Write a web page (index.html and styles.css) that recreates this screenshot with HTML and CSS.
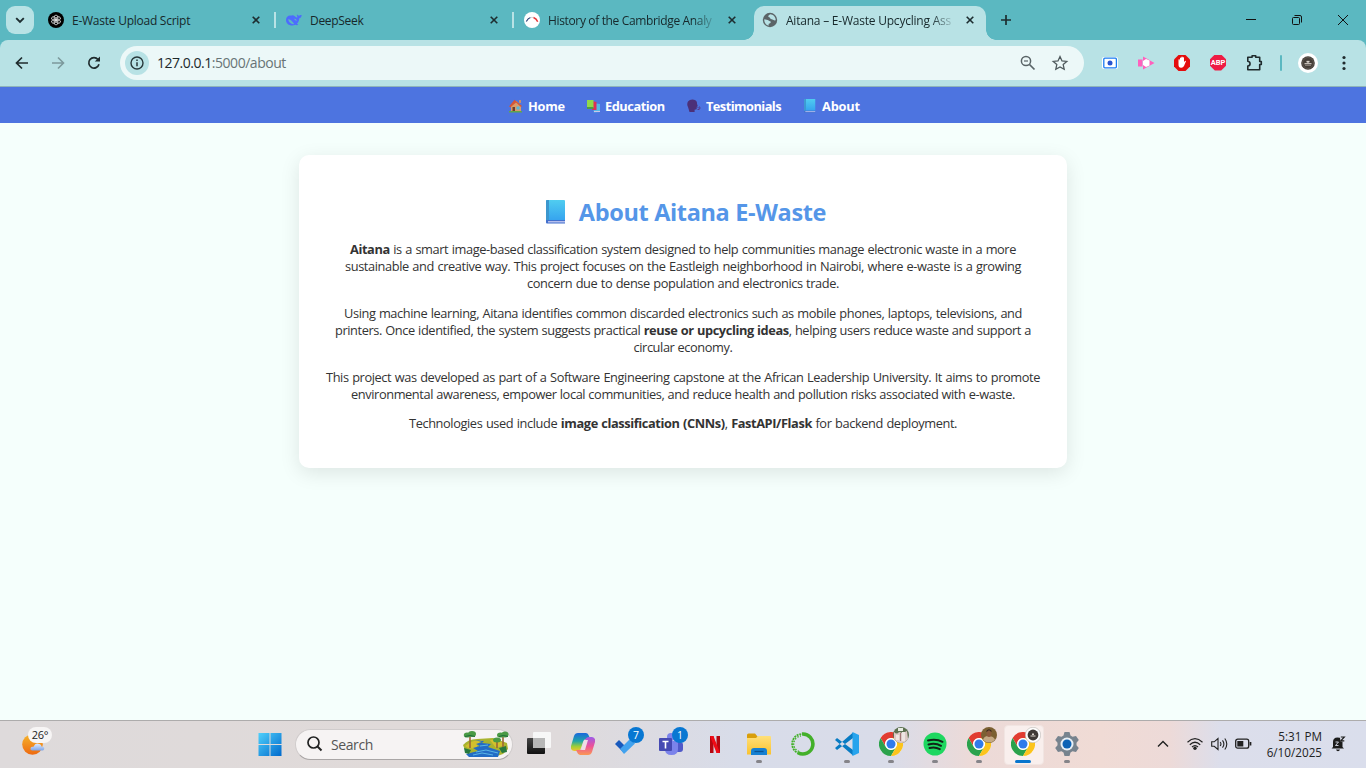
FILE: index.html
```html
<!DOCTYPE html>
<html lang="en">
<head>
<meta charset="utf-8">
<title>Aitana – E-Waste Upcycling Assistant</title>
<link rel="stylesheet" href="styles.css">
</head>
<body>
<svg class="defs" width="0" height="0">
  <defs>
    <linearGradient id="book" x1="0" y1="0" x2="0" y2="1"><stop offset="0" stop-color="#50cdf0"/><stop offset="1" stop-color="#36a4ef"/></linearGradient>
    <linearGradient id="win" x1="0" y1="0" x2="1" y2="1"><stop offset="0" stop-color="#4fd0fb"/><stop offset="1" stop-color="#0069cc"/></linearGradient>
    <linearGradient id="moon" x1="0" y1="0" x2="0" y2="1"><stop offset="0" stop-color="#f5b52c"/><stop offset="1" stop-color="#ee6910"/></linearGradient>
    <linearGradient id="cloud" x1="0" y1="0" x2="0" y2="1"><stop offset="0" stop-color="#e3efff"/><stop offset="1" stop-color="#7fa5e8"/></linearGradient>
    <linearGradient id="cop1" x1="0" y1="0" x2="0" y2="1"><stop offset="0" stop-color="#1a68dd"/><stop offset=".45" stop-color="#20a5a9"/><stop offset=".75" stop-color="#9fce37"/><stop offset="1" stop-color="#f2c32e"/></linearGradient>
    <linearGradient id="cop2" x1="0" y1="0" x2="0" y2="1"><stop offset="0" stop-color="#9c5be8"/><stop offset=".5" stop-color="#ec5199"/><stop offset="1" stop-color="#fb9854"/></linearGradient>
    <linearGradient id="fold" x1="0" y1="0" x2="0" y2="1"><stop offset="0" stop-color="#ffe07a"/><stop offset="1" stop-color="#fac22f"/></linearGradient>
    <linearGradient id="dark" x1="0" y1="0" x2="0" y2="1"><stop offset="0" stop-color="#454545"/><stop offset="1" stop-color="#111"/></linearGradient>
    <symbol id="x" viewBox="0 0 8 8"><path d="M.7.7l6.6 6.6M7.3.7L.7 7.3" stroke="#1d2d30" stroke-width="1.6"/></symbol>
    <symbol id="bluebook" viewBox="0 0 20 24"><path d="M1 0h17q1 0 1 1v19H0V1q0-1 1-1z" fill="url(#book)"/><path d="M0 1q0-1 1-1h2v20H0z" fill="#3c97ce"/><path d="M0 20h19v3.5H1q-1 0-1-1z" fill="#4370cd"/><path d="M2 21.2h17v1.2H2z" fill="#d4d3f4"/></symbol>
    <symbol id="chrome" viewBox="0 0 24 24"><circle cx="12" cy="12" r="12" fill="#fff"/><path d="M1.6 6A12 12 0 0 1 22.4 6H12a6 6 0 0 0-5.2 9z" fill="#e13c31"/><path d="M1.6 6A12 12 0 0 0 12 24l5.2-9a6 6 0 0 1-10.4 0z" fill="#2ba24c"/><path d="M22.4 6A12 12 0 0 1 12 24l5.2-9A6 6 0 0 0 12 6z" fill="#fcc41c"/><circle cx="12" cy="12" r="5.7" fill="#fff"/><circle cx="12" cy="12" r="4.5" fill="#2f7bea"/></symbol>
    <symbol id="seal" viewBox="0 0 20 20"><circle cx="10" cy="10" r="10" fill="#fff"/><circle cx="10" cy="10" r="6.8" fill="#453e38"/><circle cx="10" cy="10" r="5.5" fill="none" stroke="#6f675f" stroke-width=".6"/><path d="M6.5 10.2h7v1.1h-7zM8.3 9q1.7 1.4 3.4 0l-.7-1.6-1 1-1-1z" fill="#eee8e0"/><path d="M7 12.5h6" stroke="#9a9188" stroke-width=".7"/></symbol>
  </defs>
</svg>

<header class="tabstrip">
  <div class="tabsearch"><svg width="10" height="7" viewBox="0 0 10 7"><path d="M1.2 1.2L5 5l3.8-3.8" fill="none" stroke="#1d2d30" stroke-width="1.9"/></svg></div>
  <div class="tab">
    <svg class="fav" viewBox="0 0 16 16"><circle cx="8" cy="8" r="8" fill="#000"/><g fill="none" stroke="#ddd" stroke-width=".8"><ellipse cx="8" cy="5.7" rx="1.9" ry="2.6"/><ellipse cx="8" cy="5.7" rx="1.9" ry="2.6" transform="rotate(60 8 8)"/><ellipse cx="8" cy="5.7" rx="1.9" ry="2.6" transform="rotate(120 8 8)"/><ellipse cx="8" cy="5.7" rx="1.9" ry="2.6" transform="rotate(180 8 8)"/><ellipse cx="8" cy="5.7" rx="1.9" ry="2.6" transform="rotate(240 8 8)"/><ellipse cx="8" cy="5.7" rx="1.9" ry="2.6" transform="rotate(300 8 8)"/></g></svg>
    <span class="title t1">E-Waste Upload Script</span><svg class="close"><use href="#x"/></svg><i class="sep"></i>
  </div>
  <div class="tab">
    <svg class="fav" viewBox="0 0 16 16"><path d="M9.2 4.4C10 5.5 11 6 11.5 5c-.8-1-.8-2-.4-2.8.4 1 1.2 1.4 1.9 1.5.8-.6 1.7-.8 2.7-.6-.2 1.9-1 3-2.4 3.2-.2 2.5-1.1 4.2-2.3 5.4l1.3 1c-1 .7-2 .5-2.9 0C5 14.800 0 12.500 0 8 0 4.500 2.900 2.900 5.300 3.700 6.500 3 7.500 3.500 9.200 4.400z" fill="#4d6bfe"/><path d="M2.200 7.300c2-.5 4.200 1.900 6 4.800-2.800.4-5.600-1.500-6-4.800zM8 6.800c1.400-.3 2.500.7 2.700 2-.6-.1-1.500-.2-2.700-2z" fill="#5bb8c1"/></svg>
    <span class="title t2">DeepSeek</span><svg class="close"><use href="#x"/></svg><i class="sep"></i>
  </div>
  <div class="tab">
    <svg class="fav" viewBox="0 0 16 16"><circle cx="8" cy="8" r="8" fill="#fff"/><path d="M2.300 9.500Q4 6.200 6.500 5.500" fill="none" stroke="#2b3f77" stroke-width="1.200"/><path d="M6.500 5.500Q8 5 9.500 5.700" fill="none" stroke="#ccc" stroke-width=".8"/><path d="M9.500 5.500Q12.500 6.500 13.700 9.800" fill="none" stroke="#e5383b" stroke-width="1.500"/></svg>
    <span class="title t3 fade">History of the Cambridge Analy</span><svg class="close"><use href="#x"/></svg>
  </div>
  <div class="tab active">
    <svg class="fav" viewBox="0 0 16 16"><circle cx="8" cy="8" r="7.200" fill="#5b6467"/><path d="M8.300 2.300c-1.200.9-2 .9-2 2.100 0 1 1.600.6 1.800 1.500.3 1.200 1.300 1.100 2.300 1.500 1 .3 1.500 1.300 3.300.9C13.900 4.900 11 2.500 8.300 2.300zM2.300 7.300c1.500.4 3.300.3 4.300 1.200.9.800 2.300.6 2.200 1.700-.2 1.300-2.300 1-2.200 2.300v1.200C4.100 13.200 2 10.500 2.300 7.300z" fill="#b8e2e5"/></svg>
    <span class="title t4 fade">Aitana – E-Waste Upcycling Ass</span><svg class="close"><use href="#x"/></svg>
  </div>
  <div class="newtab"><svg width="10" height="10"><path d="M5 0v10M0 5h10" stroke="#1d2d30" stroke-width="1.700"/></svg></div>
  <div class="controls">
    <svg viewBox="0 0 46 40"><path d="M18 19.500h10" stroke="#111"/></svg>
    <svg viewBox="0 0 46 40"><rect x="18.500" y="17.500" width="7" height="7" rx="1" fill="none" stroke="#111"/><path d="M20.500 15.500h5.500q1.500 0 1.500 1.500v5.500" fill="none" stroke="#111"/></svg>
    <svg viewBox="0 0 46 40"><path d="M18 15l10 10M28 15l-10 10" stroke="#111"/></svg>
  </div>
</header>

<div class="toolwrap"><div class="toolbar">
  <svg class="cell" viewBox="0 0 36 36"><path d="M24 18H13M18 12.500L12.500 18l5.500 5.500" fill="none" stroke="#1f2b2d" stroke-width="1.700"/></svg>
  <svg class="cell" viewBox="0 0 36 36"><path d="M12 18h11M18 12.500l5.500 5.500-5.500 5.500" fill="none" stroke="#7c999c" stroke-width="1.600"/></svg>
  <svg class="cell" viewBox="0 0 36 36"><path d="M23 19.300A5.200 5.200 0 1 1 22 14.500" fill="none" stroke="#1f2b2d" stroke-width="1.700"/><path d="M24 11.500v5h-5.200z" fill="#1f2b2d"/></svg>
  <div class="omnibox">
    <div class="info"><svg width="14" height="14"><circle cx="7" cy="7" r="6" fill="none" stroke="#28383a" stroke-width="1.400"/><path d="M7 6.200v4M7 3.500v1.500" stroke="#28383a" stroke-width="1.500"/></svg></div>
    <span class="url">127.0.0.1<em>:5000/about</em></span>
    <svg class="oi" viewBox="0 0 32 32"><circle cx="14" cy="14" r="4.600" fill="none" stroke="#596467" stroke-width="1.500"/><path d="M17.500 17.500l5 5" stroke="#596467" stroke-width="1.700"/><path d="M12 14h4" stroke="#596467" stroke-width="1.200"/></svg>
    <svg class="oi" viewBox="0 0 32 32"><path d="M16 9.500l2 4.400 4.800.5-3.600 3.200 1 4.700-4.200-2.400-4.200 2.400 1-4.700-3.600-3.200 4.800-.5z" fill="none" stroke="#4f5a5d" stroke-width="1.300"/></svg>
  </div>
  <svg class="cell" viewBox="0 0 36 36"><rect x="10" y="12" width="16" height="12" rx="2" fill="#fff"/><rect x="11.800" y="13.200" width="12.600" height="9.600" rx="1" fill="#fff" stroke="#197bf2" stroke-width="1.300"/><circle cx="18" cy="18" r="2.500" fill="#2854cf"/></svg>
  <svg class="cell" viewBox="0 0 36 36"><path d="M15 11.500L26.500 18 15 24.500z" fill="#ff60bd"/><path d="M10 14.500h4.500v7H10z" fill="#ff60bd"/><path d="M15 16l3-2 3.500 1.500v5L18 22l-3-2z" fill="#fff"/></svg>
  <svg class="cell" viewBox="0 0 36 36"><path d="M14.500 10h7l4.500 4.500v7L21.500 26h-7L10 21.500v-7z" fill="#e40d0d"/><path d="M14.500 14.500q.8-.7 1.300 0l.2 2v-3.500q.7-1 1.300 0v3-4q.8-.8 1.400 0v4-3.400q.8-.7 1.300 0v4.500l1-1.200q1-.4 1 .4l-2 4.700q-1 2-3 1.800-2.500-.2-2.500-3z" fill="#fff"/></svg>
  <div class="cell abp"><span>ABP</span></div>
  <svg class="cell" viewBox="0 0 36 36"><path d="M11.800 12.300h4.300v-1.500h3.600v1.500h4v4.200h1.600v3h-1.600v5.200H11.800v-3.600c3-.5 3-4.400 0-4.900z" fill="none" stroke="#202b2d" stroke-width="1.600" stroke-linejoin="round"/></svg>
  <i class="divider"></i>
  <svg class="cell profile" viewBox="-8 -8 36 36"><use href="#seal" width="20" height="20"/></svg>
  <svg class="cell" viewBox="0 0 36 36"><g fill="#202b2d"><circle cx="18" cy="12.500" r="1.600"/><circle cx="18" cy="18" r="1.600"/><circle cx="18" cy="23.500" r="1.600"/></g></svg>
</div></div>

<nav class="nav">
  <a class="n1"><svg viewBox="0 0 14 14"><path d="M2 6.500L7.500 2l4.500 4.500V13H2z" fill="#d99b6a"/><path d="M0 7.500L5.500.8 13 7l-1 1-5-4.500-5.500 4.700z" fill="#d65536"/><path d="M3.500 8h2.500v5H3.500z" fill="#6f3d2b"/><path d="M7.500 7.500h3v3h-3z" fill="#50b7df"/><path d="M10 1h2v3h-2z" fill="#c58f6d"/><path d="M0 12h13v1.500H0z" fill="#61a64a"/></svg><span>Home</span></a>
  <a class="n2"><svg viewBox="0 0 14 14"><path d="M5 4l8 1v8l-6 .5z" fill="#54b9e7"/><path d="M5 2l4.500 1v8L5 11z" fill="#df2f55"/><path d="M0 1h6.500v8H0z" fill="#91d94b"/><path d="M0 8h6.500v2H0z" fill="#4d9b45"/><path d="M7 12h6v1H7z" fill="#ccc6e6"/></svg><span>Education</span></a>
  <a class="n3"><svg viewBox="0 0 14 14"><path d="M1 8Q-.5 5 1 2.500 3 0 7 .7q3.300.8 3 4l.8 2.500-1 .5-.2 2.500-2 .5V13H2.500z" fill="#4c3078"/><path d="M10.500 8l1.500 1.500M10.500 10.500H12M12.500 7.500q1 1.500 0 3" stroke="#573988" fill="none"/></svg><span>Testimonials</span></a>
  <a class="n4"><svg viewBox="0 0 12 14"><use href="#bluebook" width="12" height="14"/></svg><span>About</span></a>
</nav>

<main class="page">
  <section class="card">
    <h1><svg viewBox="0 0 20 24"><use href="#bluebook"/></svg><span>About Aitana E-Waste</span></h1>
    <p><span class="line a1"><b>Aitana</b> is a smart image-based classification system designed to help communities manage electronic waste in a more</span> <span class="line a2">sustainable and creative way. This project focuses on the Eastleigh neighborhood in Nairobi, where e-waste is a growing</span> <span class="line a3">concern due to dense population and electronics trade.</span></p>
    <p><span class="line b1">Using machine learning, Aitana identifies common discarded electronics such as mobile phones, laptops, televisions, and</span> <span class="line b2">printers. Once identified, the system suggests practical <b>reuse or upcycling ideas</b>, helping users reduce waste and support a</span> <span class="line b3">circular economy.</span></p>
    <p class="last-pair"><span class="line c1">This project was developed as part of a Software Engineering capstone at the African Leadership University. It aims to promote</span> <span class="line c2">environmental awareness, empower local communities, and reduce health and pollution risks associated with e-waste.</span></p>
    <p><span class="line d1">Technologies used include <b>image classification (CNNs)</b>, <b>FastAPI/Flask</b> for backend deployment.</span></p>
  </section>
</main>

<footer class="taskbar">
  <div class="weather">
    <svg width="24" height="24" viewBox="0 0 24 24"><circle cx="10.500" cy="11.500" r="10.300" fill="url(#moon)"/><path d="M10 17.500q-2-.5-1.500-2.500.7-1.600 3-1.200Q13.500 9 17.500 11q2 .8 2 2.500 3.200.2 2.700 2.500-.4 1.500-2 1.500z" fill="url(#cloud)"/></svg>
    <span class="temp">26°</span>
  </div>
  <div class="app start"><svg width="24" height="24"><g fill="url(#win)"><path d="M.5 1h11v11H.5zM12.500 1h11v11h-11zM.5 13h11v11H.5zM12.500 13h11v11h-11z"/></g></svg></div>
  <div class="search">
    <svg width="18" height="18"><circle cx="7.500" cy="7.500" r="5.500" fill="none" stroke="#222" stroke-width="1.700"/><path d="M11.500 11.500l4 4" stroke="#222" stroke-width="2"/></svg>
    <span>Search</span>
    <svg class="scene" width="48" height="28" viewBox="0 0 48 28"><path d="M1 15q5-6 14-6l16-1 14 5 1 6-5 5-9 3H14L3 20z" fill="#a9b32f"/><path d="M3 16q8-7 18-6-7 4-6 9l-9-1zM28 10q10-1 15 5l-9 3z" fill="#d3c02d"/><path d="M13 10l9 1-2 2 9 1-3 3 12 4-2 6H7l-3-3 12-3-5-3 7-2-4-2 6-2z" fill="#236cc5"/><path d="M14 22l10-2 12 3M11 25l9-2 11 2M18 16l8-1" stroke="#5ab6e6" fill="none"/><path d="M2 18l7 2-2 4-4-1zM37 18l7-2 1 6-5 1z" fill="#27793e"/><path d="M8 6v12M41 7v10M35 11v7" stroke="#9a6736" stroke-width="1.600"/><g fill="#4a9a45"><ellipse cx="5" cy="5" rx="3.200" ry="2.600"/><ellipse cx="10" cy="4" rx="4" ry="3"/><ellipse cx="38.500" cy="5" rx="3.500" ry="2.600"/><ellipse cx="43" cy="4.500" rx="3.500" ry="3"/><ellipse cx="35" cy="10" rx="4" ry="2.500"/></g><path d="M3 6.500q5-2 10 0M37 6.500q4-2 9 0" stroke="#1d6c39" fill="none"/></svg>
  </div>
  <div class="app"><svg viewBox="0 0 24 24"><rect y="6" width="18" height="16" rx="1" fill="url(#dark)"/><rect x="6" width="18" height="16" rx="1" fill="#f7f7f7"/><path d="M6 6h12v10H7q-1 0-1-1z" fill="#b7b7b7"/></svg></div>
  <div class="app"><svg viewBox="0 0 24 24"><path d="M7 1h8q2 0 3 3l1 3h-4q-2 0-3 3l-2 6q-1 3-4 3H3q-4-1-3-5L3 4q1-3 4-3z" fill="url(#cop1)"/><path d="M17 23H9q-2 0-3-3l-1-2h4q2 0 3-3l2-7q1-3 4-3h3q4 1 3 5l-3 10q-1 3-4 3z" fill="url(#cop2)"/><path d="M13 8h4l-3 10h-4z" fill="#f0dce5"/></svg></div>
  <div class="app"><svg viewBox="0 0 24 24"><path d="M0 12l4-4 8 8-4 4z" fill="#195abd"/><path d="M5 17L15 7l5 4.500L9 22z" fill="#42a2ee"/></svg><b class="badge">7</b></div>
  <div class="app"><svg viewBox="0 0 24 24"><circle cx="12" cy="5" r="4" fill="#7b83eb"/><circle cx="20" cy="8" r="3" fill="#5059c9"/><rect x="15" y="10" width="9" height="10" rx="3" fill="#5059c9"/><path d="M6 9h13v8q0 6-6.500 6T6 17z" fill="#7b83eb"/><rect y="6" width="13" height="13" rx="1" fill="#454ab3"/><path d="M3.500 9.500h6M6.500 9.500v7" stroke="#fff" stroke-width="1.600"/></svg><b class="badge">1</b></div>
  <div class="app"><svg viewBox="0 0 24 24"><path d="M7 4h3.500v17H7zM13.500 4H17v17h-3.500z" fill="#b40710"/><path d="M7 4h3.500L17 21h-3.500z" fill="#f00b16"/></svg></div>
  <div class="app run"><svg viewBox="0 0 24 24"><path d="M0 5V3q0-1.500 1.500-1.500H8l2.500 3V8H0z" fill="#d99e0b"/><path d="M0 6h9l2-2h12q1 0 1 1v17.500H0z" fill="url(#fold)"/><path d="M4 23v-4q0-3 3-3h10q3 0 3 3v4z" fill="#1680d2"/><path d="M7.500 19.500h9" stroke="#0a5394" stroke-width="1.300"/></svg></div>
  <div class="app"><svg viewBox="0 0 24 24"><path d="M11 2a10 10 0 1 1-4 18.700" fill="none" stroke="#43b02a" stroke-width="3.600"/><path d="M8 21.500A10 10 0 0 1 11 2" fill="none" stroke="#43b02a" stroke-width="1.800" stroke-dasharray="2 .8"/><path d="M8 19.500A8 8 0 0 1 10 4" fill="none" stroke="#43b02a" stroke-width="1.300" stroke-dasharray="1.500 1.400"/></svg></div>
  <div class="app run"><svg viewBox="0 0 24 24"><path d="M0 8l2-2 16 12v5.500zM0 16l2 2L18 6V.5z" fill="#087bc3"/><path d="M17.500 0L24 3v18l-6.500 3z" fill="#27a4ed"/></svg></div>
  <div class="app run"><svg viewBox="0 0 24 24"><use href="#chrome"/></svg><svg class="avatar" viewBox="0 0 16 16"><circle cx="8" cy="8" r="8" fill="#5c7150"/><path d="M1 5q3 3 5 0l4 1 4-2 1 8q-3 4-7 4T1 12z" fill="#dccac6"/><path d="M3 8h3v5H3zM9 5h3v9H9z" fill="#eee6e3"/><path d="M7 6h1v8H7z" fill="#a27776"/><path d="M5 1h5v3H5z" fill="#e8ece4"/></svg></div>
  <div class="app run"><svg viewBox="0 0 24 24"><circle cx="12" cy="12" r="11.500" fill="#1ed760"/><path d="M5 8.500q8-2.200 14.500 1.300M5.500 12.500q7-1.800 12.500 1.300M6.500 16q5.500-1.500 10.300 1.100" fill="none" stroke="#102418" stroke-width="2" stroke-linecap="round"/></svg></div>
  <div class="app run"><svg viewBox="0 0 24 24"><use href="#chrome"/></svg><svg class="avatar" viewBox="0 0 16 16"><circle cx="8" cy="8" r="8" fill="#7b6032"/><path d="M2 13q1-4 5-4 6 0 7 4-6 5-12 0z" fill="#c4a985"/><ellipse cx="8" cy="6.500" rx="2.500" ry="3.600" fill="#8a5a3c"/><path d="M5.500 4.500q2.500-3.500 5 0" stroke="#3a2a1f" stroke-width="1.200" fill="none"/></svg></div>
  <div class="app run current"><svg viewBox="0 0 24 24"><use href="#chrome"/></svg><svg class="avatar" viewBox="0 0 16 16"><circle cx="8" cy="8" r="7.700" fill="#fff" stroke="#b9b5b2" stroke-width=".6"/><circle cx="8" cy="8" r="5.400" fill="#403a35"/><path d="M5.500 8.500h5v1h-5zM7 6.500h2V8H7z" fill="#ddd6ce"/></svg></div>
  <div class="app run"><svg viewBox="0 0 24 24"><path d="M9.500 0h5l1 3.500 2 1.200L21 4l2.800 4-2.300 2.800v2.400L23.800 16 21 20l-3.500-.7-2 1.200-1 3.500h-5l-1-3.500-2-1.200L3 20 .2 16l2.300-2.800v-2.400L.2 8 3 4l3.500.7 2-1.200z" fill="#77838e"/><circle cx="12" cy="12" r="6.500" fill="#e8eff5"/><circle cx="12" cy="12" r="4.500" fill="#0c62b5"/></svg></div>
  <div class="tray">
    <svg class="chev" width="12" height="8"><path d="M1 6.500l5-5 5 5" fill="none" stroke="#202020" stroke-width="1.400"/></svg>
    <svg class="wifi" width="16" height="14"><g fill="none" stroke="#222" stroke-width="1.200"><path d="M.5 5.200Q8-1.800 15.500 5.200M2.800 7.700Q8 2.800 13.200 7.700M5 10Q8 7.200 11 10"/></g><circle cx="8" cy="11.300" r="1.700" fill="#222"/></svg>
    <svg class="vol" width="17" height="14"><g fill="none" stroke="#222" stroke-width="1.100"><path d="M.7 4.800h2.500L7 1.500v11L3.200 9.300H.7zM9.200 5q1.500 2 0 4M11.500 3.300q2.800 3.700 0 7.400M13.800 1.500q4 5.500 0 11"/></g></svg>
    <svg class="bat" width="17" height="12"><rect x=".7" y="1.200" width="13" height="9" rx="2" fill="none" stroke="#222" stroke-width="1.300"/><rect x="2.300" y="3" width="6" height="5.500" fill="#222"/><path d="M15.500 4v3.500" stroke="#222" stroke-width="1.700"/></svg>
    <div class="clock"><span class="time">5:31 PM</span><span class="date">6/10/2025</span></div>
    <svg class="bell" width="15" height="16" viewBox="0 0 15 16"><path d="M2 11V6q0-4.500 4.500-4.500 5 0 5 4.500v5l1.500 1.500H.5zM5 13.500h4q-.5 1.800-2 1.800t-2-1.800z" fill="#1c1c1c"/><path d="M4.500 6h3L4.500 9.500h3" stroke="#dde0ec" stroke-width=".9" fill="none"/><path d="M8.800 0H14v5.500H9.500z" fill="#dde0ec"/><path d="M9.800 1h3.500L9.800 4.800h3.500" stroke="#1c1c1c" stroke-width="1.200" fill="none"/></svg>
  </div>
</footer>
</body>
</html>
```
FILE: styles.css
```css
* { box-sizing: border-box; }
html, body { margin: 0; height: 100%; overflow: hidden; }
body {
  display: flex; flex-direction: column; width: 1366px; height: 768px;
  font-family: "Open Sans", "Noto Sans", sans-serif; background: #f5fffc;
}
.defs { position: absolute; }
svg { display: block; flex: none; }

.tabstrip { display: flex; height: 40px; background: #5bb8c1; flex: none; }
.tabsearch { width: 28px; height: 28px; margin: 6px 6px 0; border-radius: 9px; background: #b8e2e5; display: flex; align-items: center; justify-content: center; }
.tab { position: relative; width: 238px; height: 40px; padding-left: 8px; display: flex; align-items: center; flex: none; }
.fav { width: 16px; height: 16px; margin-right: 8px; }
.title { width: 168px; height: 20px; padding-top: 1px; line-height: 20px; white-space: nowrap; font-size: 12px; color: #17282b; flex: none; }
.t1 { letter-spacing: -.25px; }
.t2 { letter-spacing: -.3px; }
.t3 { letter-spacing: -.35px; }
.t4 { letter-spacing: -.22px; }
.fade { -webkit-mask-image: linear-gradient(90deg, #000 145px, transparent 170px); mask-image: linear-gradient(90deg, #000 145px, transparent 170px); }
.close { width: 8px; height: 8px; margin-left: 12px; }
.sep { width: 2px; height: 16px; margin-left: 14px; background: #b8e2e5; }
.active { width: 232px; height: 34px; margin-top: 6px; border-radius: 10px 10px 0 0; background: #b8e2e5; padding-bottom: 6px; }
.active::before, .active::after { content: ""; position: absolute; bottom: 0; width: 10px; height: 10px; }
.active::before { left: -10px; background: radial-gradient(circle at 0 0, transparent 9.5px, #b8e2e5 10px); }
.active::after { right: -10px; background: radial-gradient(circle at 100% 0, transparent 9.5px, #b8e2e5 10px); }
.newtab { width: 40px; display: flex; align-items: center; justify-content: center; }
.controls { display: flex; margin-left: auto; }
.controls svg { width: 46px; height: 40px; }

.toolwrap { background: #5bb8c1; flex: none; }
.toolbar { display: flex; align-items: center; height: 47px; padding: 0 4px 1px; background: #b8e2e5; border-radius: 8px 8px 0 0; border-bottom: 1px solid #8fb5ba; }
.cell { width: 36px; height: 36px; }
.omnibox { display: flex; align-items: center; width: 964px; height: 34px; margin: 0 8px; padding: 0 8px 0 5px; border-radius: 17px; background: #ecf8f8; }
.info { width: 24px; height: 24px; margin-right: 8px; border-radius: 50%; background: #b8e2e5; display: flex; align-items: center; justify-content: center; }
.url { flex: 1; font-size: 14px; letter-spacing: -.47px; color: #1d292b; }
.url em { font-style: normal; color: #687476; }
.oi { width: 32px; height: 32px; }
.abp { display: flex; align-items: center; justify-content: center; }
.abp span { width: 16px; height: 16px; background: #ee1c44; clip-path: polygon(30% 0, 70% 0, 100% 30%, 100% 70%, 70% 100%, 30% 100%, 0 70%, 0 30%); color: #fff; font: bold 7.500px/16px Roboto, sans-serif; text-align: center; }
.divider { width: 2px; height: 16px; margin: 0 9px 0 8px; border-radius: 1px; background: #5bb8c1; }
.profile { margin-left: -1px; }

.nav { display: flex; height: 36px; padding: 2px 0 0 509px; background: #4d74e0; flex: none; color: #fff; font-size: 12.8px; font-weight: 700; }
.nav a { display: flex; align-items: center; white-space: nowrap; }
.nav svg { width: 14px; height: 14px; margin-right: 5px; }
.n1 { width: 78px; letter-spacing: -.25px; }
.n2 { width: 100px; letter-spacing: -.45px; }
.nav .n2 svg { margin-right: 4px; }
.n3 { width: 116px; letter-spacing: -.55px; }
.n4 { width: 60px; letter-spacing: -.2px; }

.page { flex: 1; padding-top: 32px; background: #f5fffc; }
.card { width: 768px; height: 313px; margin: 0 auto; padding: 41px 25px 0; border-radius: 10px; background: #fff; box-shadow: 0 5px 20px rgba(0,0,0,.1); color: #333; font-size: 12.8px; }
.card h1 { display: flex; justify-content: center; align-items: center; height: 32px; margin: 0 0 13px; padding-left: 6px; font-size: 23.500px; line-height: 32px; color: #5596e8; white-space: nowrap; letter-spacing: -.35px; }
.card h1 svg { width: 20px; height: 24px; margin-right: 13px; }
.card p { margin: 0 0 13px; }
.card .last-pair { margin-bottom: 12px; }
.line { display: block; margin: 0 auto; height: 17px; line-height: 17px; white-space: nowrap; letter-spacing: -.4px; text-align: justify; text-align-last: justify; }
.a1 { width: 666px; }
.a2 { width: 676px; }
.a3 { width: 312px; }
.b1 { width: 678px; }
.b2 { width: 696px; }
.b3 { width: 99px; }
.c1 { width: 714px; }
.c2 { width: 664px; }
.d1 { width: 548px; }

.taskbar { display: flex; align-items: center; height: 48px; flex: none; border-top: 1px solid #adacac; background: linear-gradient(90deg, #dedadb 0, #e0dad9 400px, #dfdadb 560px, #d8dce9 740px, #d9dce9 890px, #ecdad8 970px, #f0dbd5 1100px, #eddad8 1170px, #dcdeeb 1220px, #dadeec 1366px); }
.weather { position: relative; width: 248px; padding-left: 22px; }
.temp { position: absolute; left: 28px; top: -6px; width: 24px; height: 16px; border-radius: 8px; background: #f7f5f5; font-size: 11px; line-height: 16px; letter-spacing: -.3px; text-align: center; color: #222; }
.app { position: relative; width: 44px; height: 47px; display: flex; align-items: center; justify-content: center; flex: none; }
.app > svg { width: 24px; height: 24px; margin-top: -1px; }
.search { display: flex; align-items: center; width: 218px; height: 31px; margin: -1px 4px 0 3px; padding-left: 10px; border-radius: 16px; background: #f6f3f3; border: 1px solid #d0cccc; border-bottom-color: #aaa6a6; font-size: 14px; color: #555; letter-spacing: -.4px; }
.search span { width: 138px; padding-left: 7px; }
.badge { position: absolute; right: 5px; top: 6px; width: 16px; height: 16px; border-radius: 50%; background: #0877d2; color: #fff; font-size: 10.500px; font-weight: 400; line-height: 16px; text-align: center; }
.app > .avatar { position: absolute; width: 16px; height: 16px; left: 24px; top: 6px; margin: 0; }
.run::after { content: ""; position: absolute; bottom: 5px; left: 19px; width: 6px; height: 3px; border-radius: 2px; background: #858489; }
.current::before { content: ""; position: absolute; left: 3px; top: 4px; width: 38px; height: 38px; border-radius: 4px; background: #f9efed; border: 1px solid #f1e5e2; }
.current > svg { position: relative; }
.current::after { left: 14px; width: 16px; background: #0875cd; }
.tray { display: flex; align-items: center; height: 47px; padding: 0 0 2px 68px; }
.wifi { margin-left: 18px; }
.vol { margin-left: 8px; }
.bat { margin-left: 7px; }
.clock { width: 70px; display: flex; flex-direction: column; text-align: right; font-size: 11.700px; line-height: 16px; color: #222; white-space: nowrap; }
.time { letter-spacing: 0; }
.date { letter-spacing: 0; }
.bell { margin-left: 9px; }
```
